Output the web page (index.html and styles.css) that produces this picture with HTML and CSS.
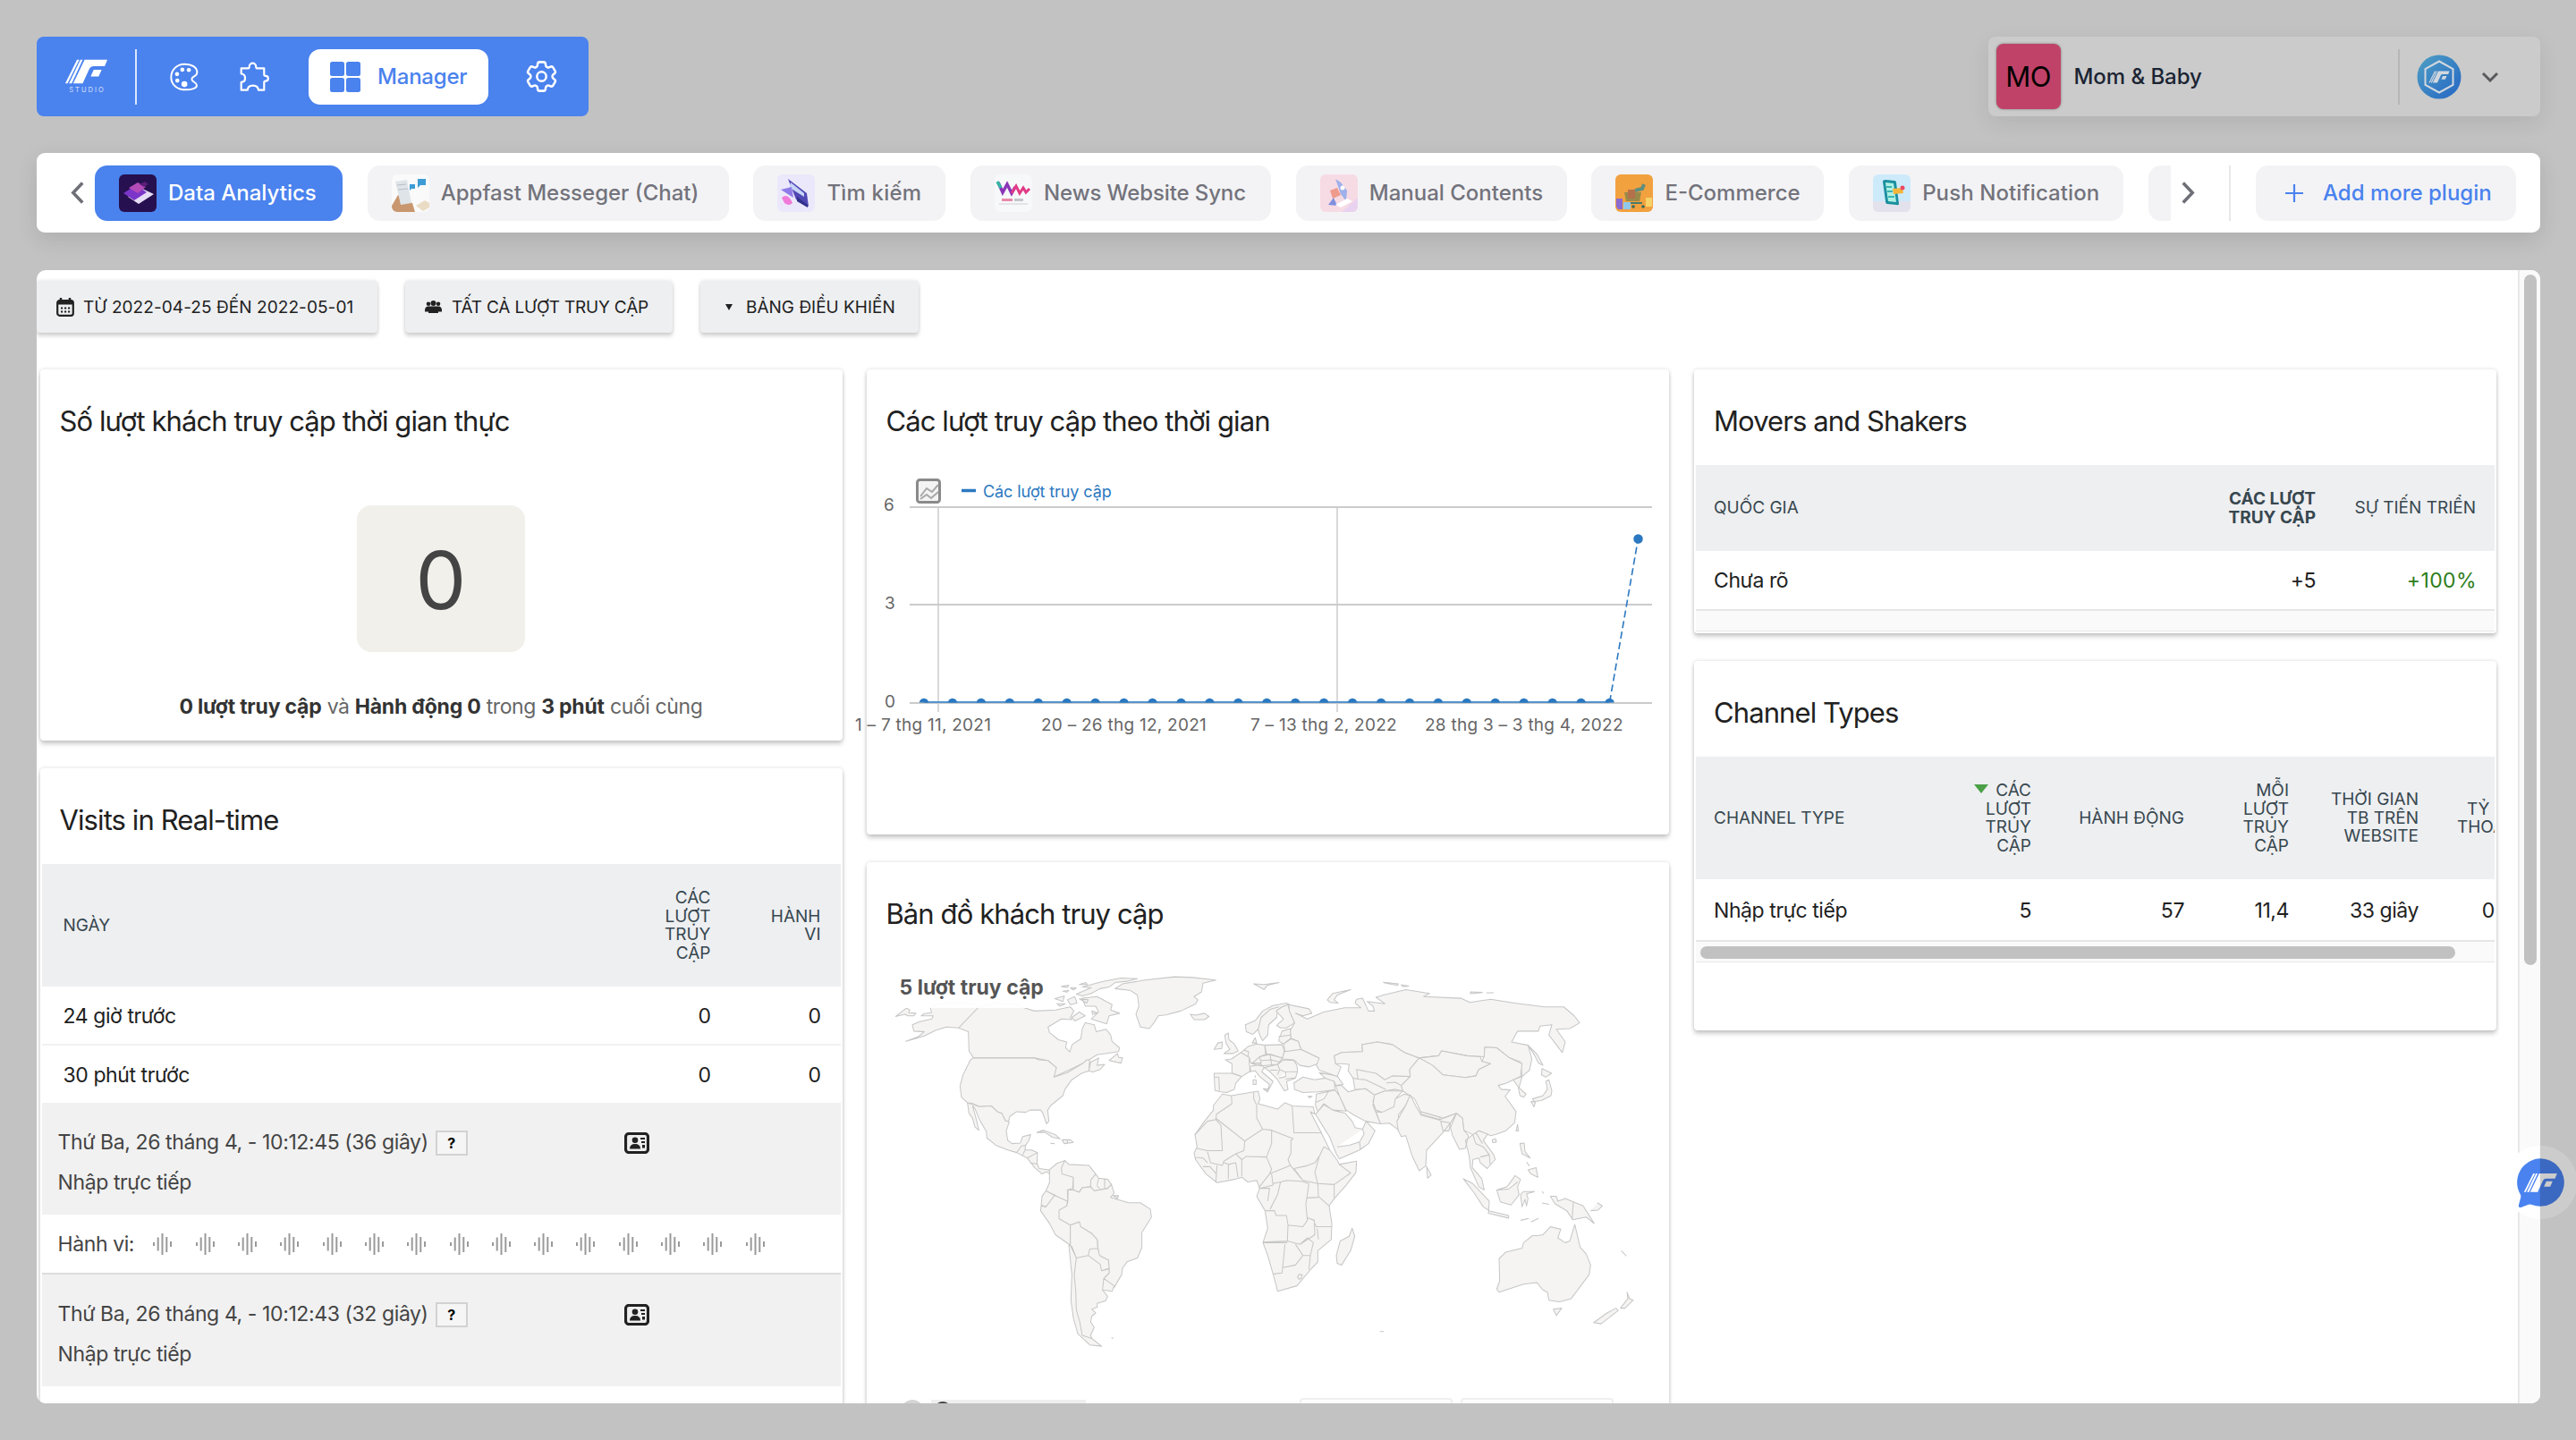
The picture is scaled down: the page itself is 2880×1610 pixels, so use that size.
FILE: index.html
```html
<!DOCTYPE html>
<html lang="vi">
<head>
<meta charset="utf-8">
<title>Data Analytics – Manager</title>
<link rel="stylesheet" href="styles.css">
</head>
<body>
<svg class="defs" width="0" height="0" aria-hidden="true">
  <symbol id="mark" viewBox="364 334 115 66">
    <path d="M366 398L397 336h6L372 398zM376 398L406 336h6L383 398zM387 398L417 336h60L470 353H440q-7 0-10 6L412 398zM441 362h21L454 380H433z"/>
  </symbol>
  <symbol id="wave" viewBox="0 0 21 24">
    <path d="M1 10v4M5.700 4.500v15M10.500 0v24M15.300 4v17M20 9v6" fill="none" stroke="#9a9a9a" stroke-width="2"/>
  </symbol>
  <symbol id="profile" viewBox="0 0 28 24">
    <rect x="1.500" y="1.500" width="25" height="21" rx="3.500" fill="#eee" stroke="#212121" stroke-width="3.200"/>
    <circle cx="12" cy="8.800" r="3.300" fill="#212121"/>
    <path d="M6 18.500q0-5.500 6-5.500t6 5.500zM18 6h5v2h-5zM19 10h4v2h-4zM20 14h3v3.500h-3z" fill="#212121"/>
  </symbol>
</svg>

<header class="top">
  <nav class="studio">
    <div class="logo">
      <svg class="logo-mark"><use href="#mark"/></svg>
      <span>STUDIO</span>
    </div>
    <i class="studio-line"></i>
    <svg class="ico-palette" viewBox="389 86 97 97">
      <path d="M438 91C411 91 393 112 393 136C393 160 413 178 443 178C462 178 480 173 480 163C480 152 463 152 463 142C463 131 481 134 481 119C481 101 463 91 438 91z" fill="none" stroke="#fff" stroke-width="6"/>
      <g fill="#fff"><circle cx="431" cy="110" r="7"/><circle cx="453" cy="111" r="7"/><circle cx="413" cy="125" r="7"/><circle cx="414" cy="147" r="7"/><circle cx="438" cy="159" r="10"/></g>
    </svg>
    <svg class="ico-puzzle" viewBox="624 86 98 98">
      <path d="M629 108h22q5 0 5-6a11 11 0 0 1 22 0q0 6 5 6h22v20q0 5 5 5a8 8 0 0 1 0 17q-5 0-5 5v25h-19q-1-15-18-15t-18 15H629v-26q13-1 13-14t-13-14z" fill="none" stroke="#fff" stroke-width="6.500" stroke-linejoin="round"/>
    </svg>
    <a class="manager">
      <svg viewBox="0 0 34 34"><path fill="#4a82ee" d="M2.500 0h11A2.500 2.500 0 0 1 16 2.500v11a2.500 2.500 0 0 1-2.500 2.500h-11A2.500 2.500 0 0 1 0 13.500v-11A2.500 2.500 0 0 1 2.500 0zM20.500 0h11A2.500 2.500 0 0 1 34 2.500v11a2.500 2.500 0 0 1-2.500 2.500h-11a2.500 2.500 0 0 1-2.500-2.500v-11A2.500 2.500 0 0 1 20.500 0zM2.500 18h11a2.500 2.500 0 0 1 2.500 2.500v11a2.500 2.500 0 0 1-2.500 2.500h-11A2.500 2.500 0 0 1 0 31.500v-11A2.500 2.500 0 0 1 2.500 18zM20.500 18h11a2.500 2.500 0 0 1 2.500 2.500v11a2.500 2.500 0 0 1-2.500 2.500h-11a2.500 2.500 0 0 1-2.500-2.500v-11a2.500 2.500 0 0 1 2.500-2.500z"/></svg>
      <span>Manager</span>
    </a>
    <svg class="ico-gear" viewBox="0 0 24 24" fill="none" stroke="#fff" stroke-width="1.400" stroke-linejoin="round">
      <path d="M9.594 3.940c.09-.542.56-.94 1.110-.94h2.593c.55 0 1.020.398 1.110.94l.213 1.281c.063.374.313.686.645.87.074.04.147.083.22.127.324.196.72.257 1.075.124l1.217-.456a1.125 1.125 0 0 1 1.370.49l1.296 2.247a1.125 1.125 0 0 1-.26 1.431l-1.003.827c-.293.24-.438.613-.431.992a6.759 6.759 0 0 1 0 .255c-.007.378.138.75.43.99l1.005.828c.424.35.534.954.26 1.430l-1.298 2.247a1.125 1.125 0 0 1-1.369.491l-1.217-.456c-.355-.133-.75-.072-1.076.124a6.570 6.570 0 0 1-.22.128c-.331.183-.581.495-.644.869l-.213 1.280c-.09.543-.56.941-1.110.941h-2.594c-.55 0-1.020-.398-1.110-.94l-.213-1.281c-.062-.374-.312-.686-.644-.87a6.520 6.520 0 0 1-.22-.127c-.325-.196-.72-.257-1.076-.124l-1.217.456a1.125 1.125 0 0 1-1.369-.49l-1.297-2.247a1.125 1.125 0 0 1 .26-1.431l1.004-.827c.292-.24.437-.613.43-.992a6.932 6.932 0 0 1 0-.255c.007-.378-.138-.75-.43-.99l-1.004-.828a1.125 1.125 0 0 1-.26-1.430l1.297-2.247a1.125 1.125 0 0 1 1.370-.491l1.216.456c.356.133.751.072 1.076-.124.072-.044.146-.087.22-.128.332-.183.582-.495.644-.869l.214-1.281z"/>
      <circle cx="12" cy="12" r="2.900"/>
    </svg>
  </nav>

  <div class="account">
    <div class="badge">MO</div>
    <span class="account-name">Mom &amp; Baby</span>
    <i class="account-line"></i>
    <svg class="avatar" viewBox="0 0 50 50">
      <defs><linearGradient id="av" x1="0" y1="0" x2="1" y2="1"><stop offset="0" stop-color="#4f9fc4"/><stop offset="1" stop-color="#2466c4"/></linearGradient></defs>
      <circle cx="25" cy="25" r="24.500" fill="url(#av)"/>
      <path d="M25 7.500L40.500 16v18L25 42.500L9.500 34V16z" fill="none" stroke="#d2d8df" stroke-width="2"/>
      <svg x="13" y="18" width="24" height="14" fill="#d2d8df"><use href="#mark"/></svg>
    </svg>
    <svg class="chev-down" viewBox="0 0 20 12"><path d="M2 2l8 8 8-8" fill="none" stroke="#5a5a5e" stroke-width="3"/></svg>
  </div>
</header>

<nav class="plugins">
  <svg class="arrow" viewBox="0 0 14 24"><path d="M12.500 1.500L2.500 12l10 10.500" fill="none" stroke="#6f6f78" stroke-width="3.400"/></svg>
  <div class="tabs">
    <a class="tab active w0">
      <svg viewBox="0 0 42 42"><rect width="42" height="42" rx="6" fill="#26104f"/><path d="M10 25l16-9 13 6-17 11z" fill="#e6dcf6"/><path d="M5 21l14-9 12 8-14 9z" fill="#7b35c9"/><path d="M11 15l10-6 9 5-9 7z" fill="#b44cb8"/><path d="M23 11l6-3 4 3-5 3z" fill="#5a1e78"/></svg>
      <span>Data Analytics</span></a>
    <a class="tab w1">
      <svg viewBox="0 0 42 42"><rect width="42" height="42" rx="6" fill="#fafafa"/><path d="M0 36V35l7-12 6 4 10 5 3 10H6a6 6 0 0 1-6-6z" fill="#c9976f"/><path d="M4 8l13-2 5 26-12 2z" fill="#dfe4e8"/><path d="M6 12l10-1M7 17l11-1" stroke="#b4bfc6"/><path d="M29 5h9v7h-6l-3 3zM20 11h6v5h-4l-2 2z" fill="#3d9bd6"/><path d="M27 35l10-6 5 3v5l-7 4z" fill="#eadbc4"/></svg>
      <span>Appfast Messeger (Chat)</span></a>
    <a class="tab w2">
      <svg viewBox="0 0 42 42"><rect width="42" height="42" rx="6" fill="#ebe8fb"/><path d="M12 5l21 16 2 15-14-8z" fill="#5148b4"/><path d="M15 9l15 12v4L14 15z" fill="#c7d4f7"/><path d="M4 17l12-3 2 12z" fill="#8f7be8"/><path d="M5 26q7-6 12 6-4 4-9 0z" fill="#f07bd8"/><path d="M22 25l12 9v3l-12-7z" fill="#31308c"/></svg>
      <span>Tìm kiếm</span></a>
    <a class="tab w3">
      <svg viewBox="0 0 42 42"><rect width="42" height="42" rx="6" fill="#f7f8fa"/><path d="M4 9l5 11 5-9 5 10 4-7" fill="none" stroke="#8a35b8" stroke-width="3.500"/><path d="M19 21l5-8 4 8 4-6 3 5 4-4" fill="none" stroke="#e23a86" stroke-width="3"/><path d="M3 8l4 7" stroke="#35b6a4" stroke-width="3.500"/><path d="M8 28.500h12" stroke="#e88aa8" stroke-width="3"/><path d="M22 28.500h10" stroke="#c5c5cc" stroke-width="3"/><path d="M5 33h32" stroke="#dcdce2" stroke-width="1.500"/></svg>
      <span>News Website Sync</span></a>
    <a class="tab w4">
      <svg viewBox="0 0 42 42"><rect width="42" height="42" rx="6" fill="#f7dbe4"/><path d="M24 42L42 26v10a6 6 0 0 1-6 6z" fill="#e8d2f0"/><path d="M17 5l6 4 7 9-1 12-6-8z" fill="#9fb0ea"/><path d="M11 18l8-3 4 8-9 4z" fill="#ee9a8c"/><path d="M9 34l6-8 4 9z" fill="#8090de"/><path d="M17 34l13-7 6 3-13 7z" fill="#fff"/><circle cx="25" cy="15" r="2.500" fill="#fff"/></svg>
      <span>Manual Contents</span></a>
    <a class="tab w5">
      <svg viewBox="0 0 42 42"><rect width="42" height="42" rx="6" fill="#f2a13f"/><path d="M10 20h19l-2 10H12z" fill="#9a8a4a"/><path d="M14 17h8v10h-8z" fill="#b5704c"/><path d="M22 18l8-2 2-5" fill="none" stroke="#5f8f7c" stroke-width="4"/><path d="M14 32h16" stroke="#4b7a6a" stroke-width="2"/><path d="M1 27h7v12H3l-2-3z" fill="#8a6ad0"/><path d="M9 31h8v8H9z" fill="#8fc8ea"/><path d="M34 26h7v10h-7z" fill="#f6d368"/><circle cx="20" cy="36" r="1.800" fill="#38685a"/><circle cx="31" cy="36" r="1.800" fill="#38685a"/></svg>
      <span>E-Commerce</span></a>
    <a class="tab w6">
      <svg viewBox="0 0 42 42"><rect width="42" height="42" rx="6" fill="#cdeafb"/><path d="M0 30h42v6a6 6 0 0 1-6 6H6a6 6 0 0 1-6-6z" fill="#e3e2ec"/><path d="M11 8q0-2 3-2l10 1q2 0 2 2l3 24q0 2-3 1l-10-1q-2 0-2-3z" fill="#1b8f9f"/><path d="M14 9l9 1 3 21-9-1z" fill="#aef0e4"/><path d="M15 14h6M16 19h6M17 25h7" stroke="#3db4b4" stroke-width="2"/><path d="M22 16l11-1 1 6-11 1z" fill="#f6b63a"/><circle cx="33" cy="15" r="2.500" fill="#ea4a66"/></svg>
      <span>Push Notification</span></a>
    <a class="tab"></a>
  </div>
  <svg class="arrow arrow-right" viewBox="0 0 14 24"><path d="M1.500 1.500L11.500 12l-10 10.500" fill="none" stroke="#6f6f78" stroke-width="3.400"/></svg>
  <i class="plugins-line"></i>
  <a class="add">
    <svg viewBox="0 0 20 20"><path d="M10 0v20M0 10h20" stroke="#4a82ee" stroke-width="2.200"/></svg>
    <span>Add more plugin</span>
  </a>
</nav>

<main class="panel">
  <div class="content">
    <div class="toolbar">
      <button class="tool tool-date">
        <svg width="20" height="21" viewBox="0 0 20 21"><path d="M5 0v4M15 0v4" stroke="#212121" stroke-width="2.500"/><rect x="1.200" y="3" width="17.600" height="16.800" rx="2.500" fill="none" stroke="#212121" stroke-width="2.200"/><path d="M1 3h18v4.500H1z" fill="#212121"/><path d="M5 11.500h2.200M9 11.500h2.200M13 11.500h2.200M5 15.500h2.200M9 15.500h2.200M13 15.500h2.200" stroke="#212121" stroke-width="2"/></svg>
        <span>TỪ 2022-04-25 ĐẾN 2022-05-01</span></button>
      <button class="tool tool-seg">
        <svg width="19" height="14" viewBox="0 0 19 14" fill="#212121"><circle cx="4" cy="3.800" r="2.300"/><circle cx="15" cy="3.800" r="2.300"/><circle cx="9.500" cy="3" r="3"/><path d="M0 11q0-4.500 4-4.500h11q4 0 4 4.500v1.500H0zM4 14q0-7 5.500-7t5.500 7z"/></svg>
        <span>TẤT CẢ LƯỢT TRUY CẬP</span></button>
      <button class="tool tool-dash">
        <svg width="8" height="7" viewBox="0 0 8 7"><path d="M0 0h8L4 7z" fill="#212121"/></svg>
        <span>BẢNG ĐIỀU KHIỂN</span></button>
    </div>

    <div class="columns">
      <div class="column">
        <section class="card card-live">
          <h2>Số lượt khách truy cập thời gian thực</h2>
          <div class="counter">0</div>
          <p class="live-text"><b>0 lượt truy cập</b> và <b>Hành động 0</b> trong <b>3 phút</b> cuối cùng</p>
        </section>
        <section class="card card-visits">
          <h2>Visits in Real-time</h2>
          <table class="data t-visits">
            <colgroup><col class="v1"><col class="v2"><col class="v3"></colgroup>
            <thead><tr><th>NGÀY</th><th>CÁC<br>LƯỢT<br>TRUY<br>CẬP</th><th>HÀNH<br>VI</th></tr></thead>
            <tbody>
              <tr><td>24 giờ trước</td><td>0</td><td>0</td></tr>
              <tr><td>30 phút trước</td><td>0</td><td>0</td></tr>
            </tbody>
          </table>
          <div class="visit">
            <div class="visit-line"><span class="when">Thứ Ba, 26 tháng 4, - 10:12:45 (36 giây)</span><span class="unknown">?</span><svg class="profile"><use href="#profile"/></svg></div>
            <div class="visit-line">Nhập trực tiếp</div>
          </div>
          <div class="actions"><span>Hành vi:</span>
            <svg><use href="#wave"/></svg><svg><use href="#wave"/></svg><svg><use href="#wave"/></svg><svg><use href="#wave"/></svg><svg><use href="#wave"/></svg><svg><use href="#wave"/></svg><svg><use href="#wave"/></svg><svg><use href="#wave"/></svg><svg><use href="#wave"/></svg><svg><use href="#wave"/></svg><svg><use href="#wave"/></svg><svg><use href="#wave"/></svg><svg><use href="#wave"/></svg><svg><use href="#wave"/></svg><svg><use href="#wave"/></svg>
          </div>
          <div class="visit">
            <div class="visit-line"><span class="when">Thứ Ba, 26 tháng 4, - 10:12:43 (32 giây)</span><span class="unknown">?</span><svg class="profile"><use href="#profile"/></svg></div>
            <div class="visit-line">Nhập trực tiếp</div>
          </div>
        </section>
      </div>

      <div class="column">
        <section class="card card-chart">
          <h2>Các lượt truy cập theo thời gian</h2>
          <svg class="chart" viewBox="969 520 897 310">
            <g fill="none" stroke="#cbcbcb" stroke-width="2">
              <path d="M1017 567H1847M1017 676H1847M1017 786H1847"/>
              <path d="M1049 567V796M1495 567V796" stroke-width="1.500"/>
            </g>
            <rect x="1025.500" y="536.500" width="25" height="25" rx="3" fill="#f4f4f4" stroke="#8a8a8a" stroke-width="3"/>
            <path d="M1029 555l7-9 6 4 7-8M1029 558l7-5 5 4 8-7" fill="none" stroke="#a8a8a8" stroke-width="2"/>
            <path d="M1075 548.500h16" stroke="#2b78c0" stroke-width="3.500"/>
            <text class="legend" x="1099" y="556">Các lượt truy cập</text>
            <path d="M1033 785H1799.600" stroke="#5594cf" stroke-width="2"/>
            <path d="M1799.600 785L1831.500 602" stroke="#2b78c0" stroke-width="1.600" stroke-dasharray="8 4"/>
            <clipPath id="above"><rect x="1000" y="560" width="860" height="225.500"/></clipPath>
            <path clip-path="url(#above)" d="M1033 786h0m31.940 0h0m31.940 0h0m31.940 0h0m31.940 0h0m31.940 0h0m31.940 0h0m31.940 0h0m31.940 0h0m31.940 0h0m31.940 0h0m31.940 0h0m31.940 0h0m31.940 0h0m31.940 0h0m31.940 0h0m31.940 0h0m31.940 0h0m31.940 0h0m31.940 0h0m31.940 0h0m31.940 0h0m31.940 0h0m31.940 0h0m31.940 0h0m31.940-183.500h0" fill="none" stroke="#2b78c0" stroke-width="10.500" stroke-linecap="round"/>
            <g class="axis">
              <text x="988" y="571">6</text><text x="989" y="681">3</text><text x="989" y="791">0</text>
              <text class="xl" x="956" y="816.500">1 – 7 thg 11, 2021</text>
              <text class="xl" x="1164" y="816.500">20 – 26 thg 12, 2021</text>
              <text class="xl" x="1398" y="816.500">7 – 13 thg 2, 2022</text>
              <text class="xl" x="1593" y="816.500">28 thg 3 – 3 thg 4, 2022</text>
            </g>
          </svg>
        </section>
        <section class="card card-map">
          <h2>Bản đồ khách truy cập</h2>
          <div class="map-wrap">
            <svg class="map" viewBox="0 0 2640 1436" preserveAspectRatio="none">
              <path d="M98 320L140 305 160 290 125 288 120 268 145 258 185 250 190 240 150 240 160 233 185 230 180 215 200 205 260 198 340 205V215L275 278 235 275 200 285 160 303zM64 242L100 216 112 222 108 230 132 232 125 240 105 240 95 235zM340 215L400 200 470 205 495 215 530 225 600 222 650 212 662 225 650 245 655 252 620 250 575 275 580 292 610 315 638 322 634 340 648 353 656 330 685 312 690 280 700 262 730 268 737 290 770 282 785 300 790 320 815 340 812 352 740 362 700 385 640 412 593 432 603 402 575 380 530 372H325L310 350 308 290 275 278z"/>
              <path d="M325 372H530L545 378 575 380 603 402 595 432 640 418 690 390 705 378 715 378 712 412 688 420 655 440 632 470 625 490 585 520 574 535 578 570 570 578 558 545 550 535 515 535 500 542 470 540 447 555 442 572 432 568 420 545 405 540 385 522 345 524 322 514 305 512 285 495 280 460 290 425 315 378zM712 412L718 385 745 372 740 395 765 392 750 408 725 416zM780 380L808 358 812 370 825 372 820 388z"/>
              <path d="M305 512L345 524 385 522 405 540 420 545 432 568 445 572 435 600 440 630 455 640 482 638 490 618 517 612 510 632 500 645 485 648 470 668 440 660 400 645 370 622 368 602 345 565 330 530 322 522 335 565 343 598 330 588 322 560 310 545zM470 668L485 648 500 645 498 660 520 660 540 668 538 700 545 718 578 722 585 738 570 728 555 735 530 715 505 685zM498 660L490 675M505 685L540 668M515 700L538 704M538 605L560 598 600 612 615 625 590 620 565 605zM622 628L650 628 660 636 630 640zM583 639l14 1M640 628v12"/>
              <path d="M580 722L605 702 632 693 620 715 622 735 660 745 658 780 640 785 642 820 638 835 600 802 568 788 580 762zM632 693L645 705 712 708 735 735 718 755 718 775 690 778 680 792 660 785 660 745 622 735 620 715zM735 735L745 748 775 752 788 768 775 780 730 788 718 775 718 755zM745 748L740 772 748 780M765 752V778M568 788L597 802 580 825 568 838 552 832 555 805z"/>
              <path d="M552 835L568 838 597 802 640 820 638 835 612 848 612 875 650 895 650 958 600 925 580 890 550 850zM642 785L660 785 680 792 690 778 718 775 730 788 775 780 788 768 797 795 785 808 810 815 845 825 885 825 918 845 922 870 890 918 890 965 875 998 840 1010 825 1030 822 1050 797 1090 762 1062 780 1045 778 1005 745 990 740 940 720 920 680 900 680 885 650 895 612 875 612 848 638 835 642 820zM793 803L812 803 808 812z"/>
              <path d="M650 895L680 885 685 900 720 920 740 940 742 968 715 970 710 990 670 998 650 958zM715 970L742 968 748 990 778 1005 780 1030 755 1038 750 1018 710 990zM762 1062L797 1085 790 1102 758 1098zM670 998L710 990 750 1018 755 1038 780 1032 780 1045 762 1062 758 1098 775 1118 768 1132 740 1140 740 1152 722 1158 735 1170 722 1180 718 1198 730 1215 718 1240 722 1250 690 1240 682 1200 670 1160 668 1100 663 1050zM645 958L655 962 670 998 663 1050 668 1100 670 1160 682 1200 690 1240 722 1250 755 1274 715 1270 675 1235 660 1185 652 1130 655 1050zM788 1247l6 3"/>
              <path d="M800 155L825 140 900 128 1000 118 1060 120 1138 128 1095 138 1090 165 1065 180 1078 190 1070 203 1020 225 970 237 945 240 930 262 915 280 885 275 870 235 880 210 875 175 850 160zM1052 235L1070 238 1100 232 1115 242 1100 252 1065 252zM670 172L720 152 690 150 760 132 820 122 875 124 840 132 800 136 780 150 750 155 720 170 690 178zM690 185L740 180 790 205 785 222 815 232 780 240 772 265 720 250 745 228 735 210 700 210zM598 186L630 178 625 195zM640 190L665 180 672 200 650 205zM655 245L680 228 700 240 665 256zM620 148l25-4-5 7zM625 163l20-3-6 6zM650 153l20 0-10 6zM680 142l22-6 5 6zM605 202l28 0-18 8zM1265 140L1300 142 1350 136 1310 145 1300 158 1285 150zM680 187L710 190 705 200zM722 225L740 230 725 236z"/>
              <path d="M1165 358L1185 345 1172 325 1168 300 1180 294 1182 315 1200 328 1213 350 1195 358zM1132 345L1145 325 1160 322 1158 342zM1237 268L1270 255 1295 225 1330 208 1375 200 1390 208 1362 212 1345 222 1342 245 1315 268 1312 300 1295 318 1285 300 1280 282 1262 298 1240 290zM1280 282L1290 245 1320 220 1350 212M1260 325L1270 308 1275 325zM1132 420L1195 420 1225 430 1205 450 1200 470 1175 480 1155 478 1135 474zM1148 432L1150 474M1132 432H1148M1170 378L1190 375 1222 355 1250 370 1250 390 1255 412 1225 430 1192 420 1192 390zM1222 355L1248 335 1275 328 1302 332 1308 360 1285 368 1290 388 1255 388 1250 370zM1232 348L1248 352 1246 366M1302 332L1360 330 1368 350 1362 372 1320 362 1305 358zM1285 368L1320 360 1362 372 1345 392 1290 397 1258 390zM1290 380L1325 378 1350 384M1320 362L1325 392M1252 398L1290 392 1300 402 1292 415 1330 445 1322 460 1310 478 1318 455 1285 430 1270 412 1252 415zM1297 468L1315 470 1312 478zM1263 440h10v15h-10zM1270 426v8"/>
              <path d="M1300 402L1345 392 1365 378 1400 380 1410 395 1412 415 1405 435 1390 440 1375 445 1380 470 1368 475 1345 440 1320 415zM1345 392L1352 408 1345 425M1320 410H1345M1352 408L1370 415H1410M1350 435L1372 430V415M1372 438L1405 434"/>
              <path d="M1160 485L1190 490 1280 476 1286 500 1280 515 1345 532 1370 512 1395 522 1465 525 1470 548 1455 540 1495 612 1520 660 1545 692 1552 705 1610 695 1608 730 1575 770 1535 812 1518 835 1527 890 1525 940 1480 975 1480 1010 1455 1035 1410 1085 1345 1102 1335 1065 1312 990 1296 950 1312 905 1303 850 1275 805 1285 780 1275 755 1245 760 1225 745 1200 752 1142 762 1105 735 1070 690 1065 670 1075 650 1068 612 1100 570 1130 535 1130 520z"/>
              <path fill="none" d="M1190 490L1192 515 1140 548 1138 565 1110 570 1068 612M1138 565L1155 582 1160 662 1110 662 1075 655M1140 562L1235 632 1295 595 1275 560 1275 520 1265 500V480M1235 632L1232 662 1205 672 1165 695 1160 708 1120 700 1110 665M1070 683L1095 685 1110 700M1205 672L1225 690 1240 680 1308 682 1325 640 1325 598 1295 595M1325 598L1398 625M1394 522L1400 606H1492M1398 625L1390 630 1390 670 1380 690 1388 708 1318 735M1308 682L1325 720 1318 735 1282 778M1225 690V742M1180 705V750M1180 705L1205 700 1212 745M1142 708L1138 760M1095 712L1118 712 1140 735M1165 700L1180 705M1325 735L1330 770 1285 780H1318L1312 820M1330 765L1355 760 1345 800 1320 845M1388 708L1425 750M1355 760L1375 755 1425 758 1450 765M1400 718L1440 710 1470 700 1485 680 1500 650 1520 660M1400 718L1430 755 1480 765 1470 730 1485 680M1480 765L1535 768 1590 732 1552 705M1480 765L1482 805 1518 835M1535 768V810M1450 765L1440 830 1445 880 1430 900 1380 895 1375 865 1340 865 1335 850H1303M1380 895L1378 945 1296 948M1378 945L1420 955 1470 925 1468 880 1445 872M1442 810L1482 808M1470 890L1475 900H1526M1478 905L1482 940M1370 955L1365 1000 1360 1045 1330 1048M1405 955L1430 990 1405 1020 1362 1028M1420 955L1445 935 1465 950 1455 990H1430M1455 990L1450 1035M1412 1056l8-8 8 4-4 10-8 2zM1296 950L1378 950"/>
              <g transform="translate(1320 0)">
                <path d="M22 270L45 250 20 225 40 212 60 205 65 225 82 262 55 278 35 278zM40 288L68 280 70 310 45 328 28 318zM28 305L70 300M45 328L70 312 95 320 104 345 50 352zM48 352L104 345 165 372 160 390 130 400 100 395 80 378 40 375zM80 450L110 432 150 440 185 435 215 445 218 472 160 478 110 480 82 470zM165 418L225 428 245 455 220 458 215 445 185 435zM127 492h14l-8 4z"/>
                <path d="M62 205L130 218 140 232 110 240 85 232 125 250 180 228 250 215 305 215 285 200 290 188 310 185 330 225 350 225 345 210 325 195 385 202 355 182 380 175 455 158 535 170 515 180 640 185 670 198 740 188 820 200 920 212 985 212 1020 240 1038 262 1005 280 960 282 990 322 980 355 935 300 945 268 905 272 900 288 830 288 810 322 865 332 878 375 870 410 845 430 840 385 800 370 760 340 720 338 718 368 660 365 575 350 565 365 500 372 450 355 410 330 360 322 308 330 310 352 240 355 215 365 220 390 238 400 225 430 165 410 155 395 165 372 104 345 95 320 70 310 68 285 82 262 65 225z"/>
                <path d="M215 365L240 355 310 352 308 330 360 322 410 330 450 355 500 372 468 408 470 430 410 428 385 440 355 420 290 408 295 438 278 435 262 412 265 392 240 390 220 390zM278 435L295 438 290 408 355 420 385 440 410 428 470 430 440 458 445 475 420 470 385 475 350 488 320 468 285 472zM295 438L320 440 388 470M390 450L420 448 440 458M500 372L565 365 575 350 660 365 705 368 710 382 740 390 700 408 690 428 655 433 580 425 545 395z"/>
                <path d="M500 372L545 395 580 425 655 433 690 428 700 408 740 390 710 382 718 368 720 338 760 340 800 370 845 390 840 430 815 440 795 450 765 458 775 470 805 472 788 492 825 540 820 575 790 600 760 610 740 615 700 600 680 612 650 598 645 560 625 545 580 560 505 540 485 500 445 475 440 458 470 430 468 408zM815 440L845 430 835 465 858 485 850 495 838 490 832 462zM880 500L915 490 930 470 925 445 935 440 945 475 942 490 910 505 885 508zM912 405L944 420 925 432 910 425zM875 508L890 510 885 525zM865 332L895 360 915 395 900 388 885 360zM825 600L830 580 833 600zM745 628l12-3 2 10-12 2z"/>
                <path d="M220 458L240 458 262 478 285 472 320 468 350 488 345 520 370 578 320 570 280 550 255 535 232 490zM155 485L218 472 232 490 255 538 210 535 180 515 160 540 152 520zM155 510L180 500 195 478M152 548L180 518 210 535 252 545 275 570 285 590 310 595 322 570 352 600 330 640 300 660 232 688 222 672 200 620 170 575zM225 650L265 645 300 635 315 610 310 595M300 635L303 658M350 488L385 475 445 475 420 500 415 525 375 542 355 535 345 510zM355 540L375 542 415 525 420 500 450 485 470 490 455 520 430 550 435 600 400 576 370 578z"/>
                <path d="M470 488L490 525 505 548 570 565 625 545 605 575 580 605 525 660 522 710 500 725 475 675 455 615 440 618 430 600 425 570 455 520zM505 540L570 558V567L505 550zM572 570L605 575 600 600 580 600zM525 712L540 738 528 748zM625 545L645 560 650 598 665 615 655 655 635 658 612 615 605 590zM655 630L680 612 700 600 730 610 715 630 750 675 755 690 728 718 705 700 700 685 680 690 678 715 710 750 718 785 700 775 672 715 668 680zM680 612L690 640 715 650 735 675 705 682M690 605L712 640M735 675L738 705"/>
                <path d="M648 750L680 765 735 820 733 848 715 838 685 795zM733 850L800 865 800 873 732 858zM760 785L795 775 822 740 840 752 830 775 835 800 808 832 772 822zM765 785L800 782 830 760M840 800L850 790 887 790 860 797 865 812 860 835 855 815 845 838zM838 640L852 638 855 665 872 685 845 672zM865 722L892 715 898 745 875 735zM860 698l10 12M912 790l6 6M912 826L935 830M840 880L868 874M875 885L900 874M940 805L960 805 965 820 990 812 1050 835 1087 890 1060 870 1015 878 995 850 955 828zM1017 822L1013 878M1075 850L1100 848 1114 835 1098 825M1178 975L1195 992"/>
                <path d="M768 1000L790 980 845 967 850 950 880 928 895 928 915 925 940 900 975 908 965 935 990 950 1005 945 1022 893 1040 965 1060 985 1075 1020 1070 1050 1010 1125 970 1135 935 1130 930 1105 915 1098 895 1075 850 1080 800 1095 768 1105 760 1095 770 1070zM950 1158L978 1155 960 1178zM1085 1200L1130 1170 1160 1155 1168 1162 1110 1204zM1175 1155L1200 1125 1197 1105 1205 1125 1218 1130 1190 1155zM275 905L284 930 270 975 240 1020 225 1015 222 990 235 945 265 930zM368 1228h14M192 190L210 170 270 158 225 175 215 190 228 200 200 198zM380 135L430 140 428 145 385 137zM440 143l25 4-20 2zM672 165l40 2-40 4zM725 168h25"/>
              </g>
            </svg>
            <span class="map-label">5 lượt truy cập</span>
          </div>
          <div class="map-foot"><i class="dot"></i><i class="pick"><i class="globe"></i></i><i class="sel"></i><i class="sel"></i></div>
        </section>
      </div>

      <div class="column">
        <section class="card card-movers">
          <h2>Movers and Shakers</h2>
          <table class="data t-movers">
            <colgroup><col class="m1"><col class="m2"></colgroup>
            <thead><tr><th>QUỐC GIA</th><th><b>CÁC LƯỢT<br>TRUY CẬP</b></th><th>SỰ TIẾN TRIỂN</th></tr></thead>
            <tbody><tr><td>Chưa rõ</td><td>+5</td><td class="up">+100%</td></tr></tbody>
          </table>
          <div class="hscroll"></div>
        </section>
        <section class="card card-channels">
          <h2>Channel Types</h2>
          <div class="clip">
            <table class="data t-channels">
              <colgroup><col class="c1"><col class="c2"><col class="c3"><col class="c4"><col class="c5"></colgroup>
              <thead><tr><th>CHANNEL TYPE</th><th><i class="sort"></i>CÁC<br>LƯỢT<br>TRUY<br>CẬP</th><th>HÀNH ĐỘNG</th><th>MỖI<br>LƯỢT<br>TRUY<br>CẬP</th><th>THỜI GIAN<br>TB TRÊN<br>WEBSITE</th><th>TỶ LỆ<br>THOÁT</th></tr></thead>
              <tbody><tr><td>Nhập trực tiếp</td><td>5</td><td>57</td><td>11,4</td><td>33 giây</td><td>0%</td></tr></tbody>
            </table>
          </div>
          <div class="hscroll"><i></i></div>
        </section>
      </div>
    </div>
  </div>
  <div class="vscroll"><i></i></div>
</main>

<svg class="chat" viewBox="298 243 242 246">
  <clipPath id="halo"><circle cx="421" cy="366" r="123"/></clipPath>
  <circle cx="421" cy="366" r="123" fill="#fff"/>
  <path d="M421 286a80 80 0 1 1-28 155q-8-3-16 1l-21 8q-9 1-8-7l7-26q2-6-3-14A80 80 0 0 1 421 286z" fill="#4a83f0"/>
  <svg x="364" y="334" width="115" height="66" fill="#fff"><use href="#mark"/></svg>
  <rect x="420" y="240" width="130" height="250" fill="#000" fill-opacity=".2" clip-path="url(#halo)"/>
</svg>
</body>
</html>
```
FILE: styles.css
```css
* { box-sizing: border-box; }
body {
  position: relative;
  display: flex;
  flex-direction: column;
  width: 2880px;
  height: 1610px;
  margin: 0;
  padding: 41px 40px 41px 41px;
  overflow: hidden;
  background: #c2c2c2;
  color: #212121;
  font-family: Inter, "Noto Sans", sans-serif;
  white-space: nowrap;
}
svg { display: block; flex: none; }
i { display: block; flex: none; }
.defs { position: absolute; }

/* header */
.top { display: flex; justify-content: space-between; height: 89px; }
.studio {
  display: flex;
  align-items: center;
  width: 617px;
  padding-left: 31px;
  border-radius: 8px;
  background: #4a82ee;
}
.logo { width: 49px; color: #fff; font-size: 7.500px; line-height: 8px; letter-spacing: 2px; text-align: center; }
.logo span { display: block; margin-top: 3px; padding-left: 2px; opacity: .75; }
.logo-mark { width: 49px; height: 28px; fill: #fff; }
.studio-line { width: 2px; height: 62px; margin-left: 30px; background: #dbe6fc; }
.ico-palette { width: 32px; height: 32px; margin-left: 37px; }
.ico-puzzle { width: 33px; height: 33px; margin-left: 46px; }
.manager {
  display: flex;
  align-items: center;
  width: 201px;
  height: 62px;
  margin-left: 44px;
  padding-left: 24px;
  border-radius: 13px;
  background: #fff;
  color: #4a82ee;
  font-size: 24px;
  font-weight: 500;
  letter-spacing: -.2px;
}
.manager svg { width: 34px; height: 34px; margin-right: 19px; }
.ico-gear { width: 43px; height: 43px; margin-left: 38px; }

.account {
  display: flex;
  align-items: center;
  width: 617px;
  padding-left: 8.500px;
  border-radius: 8px;
  background: #cbcbcb;
  box-shadow: 0 8px 24px rgba(0, 0, 0, .08);
}
.badge {
  width: 72px;
  height: 73px;
  border-radius: 8px;
  background: #c04268;
  box-shadow: 0 0 3px rgba(0, 0, 0, .4);
  color: #000;
  font-size: 31px;
  line-height: 73px;
  letter-spacing: -.5px;
  text-align: center;
}
.account-name { width: 377px; padding-left: 15px; color: #1b2433; font-size: 24px; font-weight: 500; letter-spacing: -.05px; }
.account-line { width: 2px; height: 62px; background: #b6b6b6; }
.avatar { width: 50px; height: 50px; margin-left: 19px; }
.chev-down { width: 20px; height: 12px; margin-left: 22px; }

/* plugin bar */
.plugins {
  display: flex;
  align-items: center;
  height: 89px;
  margin-top: 41px;
  padding: 0 27px 0 38px;
  border-radius: 9px;
  background: #fff;
  box-shadow: 0 8px 24px rgba(0, 0, 0, .1);
}
.arrow { width: 15px; height: 25px; }
.tabs { display: flex; gap: 27.700px; width: 2321px; margin-left: 12px; overflow: hidden; }
.tab {
  display: flex;
  flex: none;
  align-items: center;
  width: 280px;
  height: 62px;
  padding-left: 27px;
  border-radius: 14px;
  background: #f3f3f5;
  color: #73737c;
  font-size: 24px;
  font-weight: 500;
}
.tab svg { width: 42px; height: 42px; margin-right: 13px; }
.tab.active { background: #4a82ee; color: #fff; }
.w0 { width: 277px; }
.w1 { width: 404px; }
.w2 { width: 215px; letter-spacing: .2px; }
.w3 { width: 336px; letter-spacing: -.12px; }
.w4 { width: 303px; }
.w5 { width: 260px; }
.w6 { width: 307px; letter-spacing: .1px; }
.arrow-right { margin-left: 12px; }
.plugins-line { width: 2px; height: 62px; margin-left: 38px; background: #e8e8ea; }
.add {
  display: flex;
  align-items: center;
  width: 291px;
  height: 62px;
  margin-left: auto;
  padding-left: 33px;
  border-radius: 14px;
  background: #f3f3f5;
  color: #4a82ee;
  font-size: 24px;
  font-weight: 500;
}
.add svg { width: 20px; height: 20px; margin-right: 22px; }

/* dashboard panel */
.panel {
  display: flex;
  height: 1267px;
  margin-top: 42px;
  border-radius: 10px;
  overflow: hidden;
  background: #fff;
}
.content { width: 2774px; height: 1267px; }
.vscroll { width: 25px; padding: 5px 0 0 5px; border-left: 2px solid #e8e8e8; background: #fafafa; }
.vscroll i { width: 14px; height: 772px; border-radius: 7px; background: #c1c1c1; }

.toolbar { display: flex; gap: 31px; padding-top: 12px; }
.tool {
  display: flex;
  align-items: center;
  height: 58px;
  margin: 0;
  padding: 0 0 0 22px;
  border: 0;
  border-radius: 4px;
  background: #eeeff1;
  box-shadow: 0 4px 4px rgba(0, 0, 0, .15), 0 0 4px rgba(0, 0, 0, .12);
  color: #212121;
  font: 400 19px Inter, "Noto Sans", sans-serif;
}
.tool-date { width: 381px; }
.tool-date span { margin-left: 10px; letter-spacing: .07px; }
.tool-seg { width: 299px; }
.tool-seg span { margin-left: 11px; letter-spacing: -.18px; }
.tool-dash { width: 244px; padding-left: 28px; }
.tool-dash span { margin-left: 15px; }

.columns { display: flex; gap: 27px; margin: 41px 0 0 3.500px; }
.column { display: flex; flex-direction: column; gap: 31px; width: 897px; }
.column:last-child { margin-left: 1.500px; }
.card {
  padding: 0 2px;
  border-radius: 4px;
  background: #fff;
  box-shadow: 0 4px 5px rgba(0, 0, 0, .18), 0 0 4px rgba(0, 0, 0, .14);
}
.card h2 {
  height: 106.500px;
  margin: 0;
  padding: 38px 0 0 20px;
  font-size: 31px;
  font-weight: 400;
  line-height: 39px;
  letter-spacing: -.91px;
}

.card-live { height: 415px; }
.counter {
  width: 188px;
  height: 164px;
  margin: 45px auto 0;
  border-radius: 16px;
  background: #f1f0eb;
  color: #444;
  font-size: 90px;
  line-height: 168px;
  text-align: center;
}
.live-text { margin: 46px 0 0; color: #666; font-size: 23px; line-height: 30px; letter-spacing: -.38px; text-align: center; }
.live-text b { color: #333; letter-spacing: -.2px; }

.card-visits { height: 800px; }

/* tables */
.data { width: 100%; border-collapse: collapse; table-layout: fixed; }
.data th {
  padding: 2px 22px 0 0;
  background: #eeeff1;
  color: #37474f;
  font-size: 19px;
  font-weight: 400;
  line-height: 20.500px;
  text-align: right;
}
.data td { padding: 2px 22px 0 0; color: #212121; font-size: 23px; letter-spacing: -.42px; text-align: right; }
.data th:first-child, .data td:first-child { padding-left: 24px; text-align: left; }
.t-visits th { height: 137px; }
.t-visits td { height: 65px; }
.t-visits tbody tr:first-child td { border-bottom: 2px solid #f1f1f1; }
.v1 { width: 600px; }
.v2 { width: 170px; }

.visit { height: 125px; padding: 22px 0 0 18px; background: #f1f1f1; color: #444; font-size: 23px; letter-spacing: -.4px; }
.visit-line { display: flex; align-items: center; height: 45px; }
.when { width: 422px; }
.unknown {
  width: 36px;
  height: 28px;
  margin-top: 2px;
  border: 2px solid #d2d2d2;
  background: #f5f5f5;
  color: #000;
  font-size: 16px;
  font-weight: 700;
  line-height: 25px;
  text-align: center;
}
.profile { width: 28px; height: 24px; margin: 2px 0 0 175px; }
.actions { display: flex; align-items: center; gap: 26.300px; height: 67px; border-bottom: 2px solid #ddd; padding: 2px 0 0 18px; color: #444; font-size: 23px; letter-spacing: -.4px; }
.actions span { width: 80.700px; }
.actions svg { width: 21px; height: 24px; }

/* evolution chart */
.card-chart { height: 520px; padding: 0; }
.card-chart h2, .card-map h2 { padding-left: 22px; height: 107px; }
.chart { width: 897px; height: 310px; overflow: visible; }
.chart text { font-size: 19px; }
.chart .legend { fill: #2b78c0; font-size: 18px; letter-spacing: -.1px; }
.axis { fill: #666; }
.axis .xl { letter-spacing: .25px; }

/* visitor map */
.card-map { height: 700px; padding: 0; }
.card-map h2 { height: 86px; }
.map-wrap { position: relative; width: 880px; height: 513px; margin-left: 11px; }
.map { width: 880px; height: 513px; fill: #f5f4f3; stroke: #c6c6c6; stroke-width: 3; stroke-linejoin: round; }
.map-label {
  position: absolute;
  left: 16px;
  top: 36px;
  width: 180px;
  height: 41px;
  padding-left: 10px;
  background: rgba(255, 255, 255, .93);
  color: #555;
  font-size: 23px;
  font-weight: 700;
  line-height: 36px;
}
.map-foot { display: flex; align-items: flex-start; }
.dot { width: 26px; height: 26px; margin: 2px 0 0 38px; border-radius: 50%; background: #d4d4d4; }
.pick { width: 173px; height: 40px; margin: 2px 0 0 8px; padding: 2px 0 0 3px; background: #efefef; }
.globe { width: 20px; height: 20px; border-radius: 50%; background: #444; }
.sel { width: 171px; height: 40px; margin-left: 9px; border: 2px solid #efefef; border-radius: 4px; }
.pick + .sel { margin-left: 239px; }

/* right column */
.card-movers { height: 295px; }
.t-movers th, .t-channels th, .t-movers td, .t-channels td { padding-right: 21px; }
.card .t-movers th:first-child, .card .t-movers td:first-child,
.card .t-channels th:first-child, .card .t-channels td:first-child { padding-left: 20px; }
.t-movers th { height: 96px; }
.t-movers td { height: 65px; }
.t-movers td.up { padding-right: 20px; color: #2e7d1a; letter-spacing: .4px; }
.m1 { width: 534px; }
.m2 { width: 180px; }
.hscroll { height: 25px; border-top: 2px solid #e6e6e6; border-bottom: 1px solid #e8e8e8; background: #fafafa; }
.card-channels { height: 413px; }
.clip { width: 893px; overflow: hidden; }
.clip .t-channels { width: 936px; }
.t-channels th { height: 137px; }
.t-channels td { height: 68px; }
.c1 { width: 256px; }
.c2 { width: 140px; }
.c3 { width: 171px; }
.c4 { width: 117px; }
.c5 { width: 145px; }
.sort {
  display: inline-block;
  margin-right: 8px;
  border: 8px solid transparent;
  border-top: 10px solid #4ba047;
  border-bottom: 0;
  vertical-align: 3px;
}
.card-channels .hscroll { padding: 5px 0 0 5px; }
.card-channels .hscroll i { width: 844px; height: 14px; border-radius: 7px; background: #c1c1c1; }

.chat { position: absolute; left: 2799px; top: 1281px; width: 81px; height: 82px; }
```
